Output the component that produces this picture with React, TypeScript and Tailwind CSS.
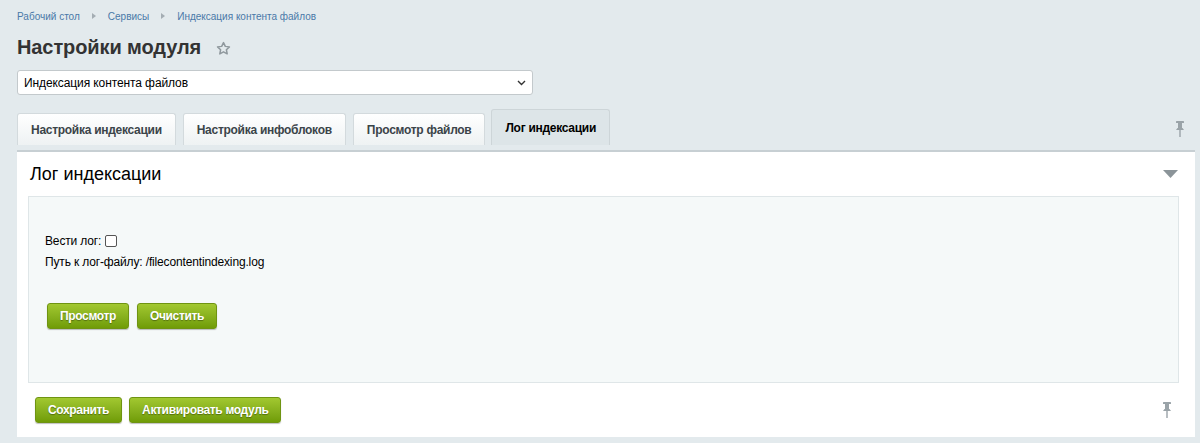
import React from "react";

const GreenBtn = ({ children }: { children: React.ReactNode }) => (
  <button className="h-[26px] px-[12px] rounded-[3px] border border-[#6f9412] bg-gradient-to-b from-[#a2c830] to-[#709c06] text-white text-[12px] tracking-[-0.35px] font-bold [text-shadow:0_1px_1px_rgba(0,0,0,0.35)] shadow-[0_1px_1px_rgba(0,0,0,0.25)] leading-none">
    {children}
  </button>
);

const Pin = () => (
  <svg width="10" height="16" viewBox="0 0 10 16" fill="#9aa3a8">
    <rect x="1" y="0" width="8" height="2" rx="0.5" />
    <rect x="3" y="2" width="4" height="5" />
    <path d="M1 9 L2.5 7 H7.5 L9 9 Z" />
    <rect x="4.3" y="9" width="1.4" height="7" />
  </svg>
);

const Arrow = () => (
  <svg width="4" height="6" viewBox="0 0 4 6" className="mx-[12px]" fill="#a4adb3">
    <path d="M0 0 L4 3 L0 6 Z" />
  </svg>
);

export default function App() {
  const tabs = ["Настройка индексации", "Настройка инфоблоков", "Просмотр файлов"];
  return (
    <div className="w-[1200px] h-[443px] overflow-hidden bg-[#e3eaed] font-['Liberation_Sans',Arial,sans-serif] text-[#333]">
      <div className="pl-[17px] pr-[5px]">
        <div className="flex items-center h-[14px] mt-[9px] text-[10px] text-[#4a79a8]">
          <span>Рабочий стол</span>
          <Arrow />
          <span>Сервисы</span>
          <Arrow />
          <span>Индексация контента файлов</span>
        </div>
        <div className="flex items-center h-[24px] mt-[12px]">
          <h1 className="text-[20px] font-bold text-[#333] leading-none tracking-[-0.1px]">Настройки модуля</h1>
          <svg width="15" height="15" viewBox="0 0 24 24" className="ml-[15px] mt-[2px]" fill="none" stroke="#8f989d" strokeWidth="2.4" strokeLinejoin="round">
            <path d="M12 2.5l2.9 6.1 6.6.8-4.9 4.6 1.3 6.6L12 17.3l-5.9 3.3 1.3-6.6-4.9-4.6 6.6-.8z" />
          </svg>
        </div>
        <div className="mt-[11px] w-[516px] h-[25px] bg-white border border-[#c3c9cc] rounded-[3px] flex items-center justify-between pl-[6px] pr-[6px] text-[12px] tracking-[-0.1px] text-[#000]">
          <span>Индексация контента файлов</span>
          <svg width="9" height="6" viewBox="0 0 9 6" fill="none" stroke="#333" strokeWidth="1.4">
            <path d="M1 1l3.5 3.5L8 1" />
          </svg>
        </div>
        <div className="flex items-end mt-[14px] h-[36px]">
          <div className="flex items-end gap-[7px] flex-1">
            {tabs.map((t) => (
              <div key={t} className="h-[32px] px-[13px] flex items-center bg-gradient-to-b from-[#ffffff] to-[#eef2f3] border border-b-0 border-[#d3dadd] rounded-t-[3px] text-[12px] tracking-[-0.28px] font-bold text-[#3b4449]">
                {t}
              </div>
            ))}
            <div className="h-[36px] px-[13px] flex items-center bg-[#dde5e8] border border-b-0 border-[#cdd5d8] rounded-t-[3px] text-[12px] tracking-[-0.28px] font-bold text-[#000] -ml-[1px]">
              Лог индексации
            </div>
          </div>
          <div className="pb-[8px] pr-[10px]">
            <Pin />
          </div>
        </div>
        <div className="mt-[5px] w-[1178px] h-[287px] bg-white border-t-2 border-[#c7cfd3] flex flex-col">
          <div className="flex items-center justify-between h-[44px] pl-[13px] pr-[17px]">
            <span className="text-[18px] text-[#000]">Лог индексации</span>
            <svg width="15" height="8" viewBox="0 0 15 8" fill="#8b9499">
              <path d="M0 0 H15 L7.5 8 Z" />
            </svg>
          </div>
          <div className="ml-[11px] mr-[16px] h-[187px] bg-[#f5f9f9] border border-[#dfe6e8] pl-[16px] pt-[36px]">
            <div className="flex items-center text-[12px] tracking-[-0.15px] text-[#000] h-[16px]">
              <span>Вести лог:</span>
              <span className="ml-[4px] w-[12px] h-[12px] border border-[#555] rounded-[2px] bg-white inline-block" />
            </div>
            <div className="text-[12px] tracking-[-0.15px] text-[#000] mt-[5px] h-[16px] leading-[16px]">
              Путь к лог-файлу: /filecontentindexing.log
            </div>
            <div className="flex gap-[8px] mt-[33px] ml-[2px]">
              <GreenBtn>Просмотр</GreenBtn>
              <GreenBtn>Очистить</GreenBtn>
            </div>
          </div>
          <div className="flex items-center justify-between h-[54px] pl-[18px] pr-[23px]">
            <div className="flex gap-[7px]">
              <GreenBtn>Сохранить</GreenBtn>
              <GreenBtn>Активировать модуль</GreenBtn>
            </div>
            <Pin />
          </div>
        </div>
      </div>
    </div>
  );
}
